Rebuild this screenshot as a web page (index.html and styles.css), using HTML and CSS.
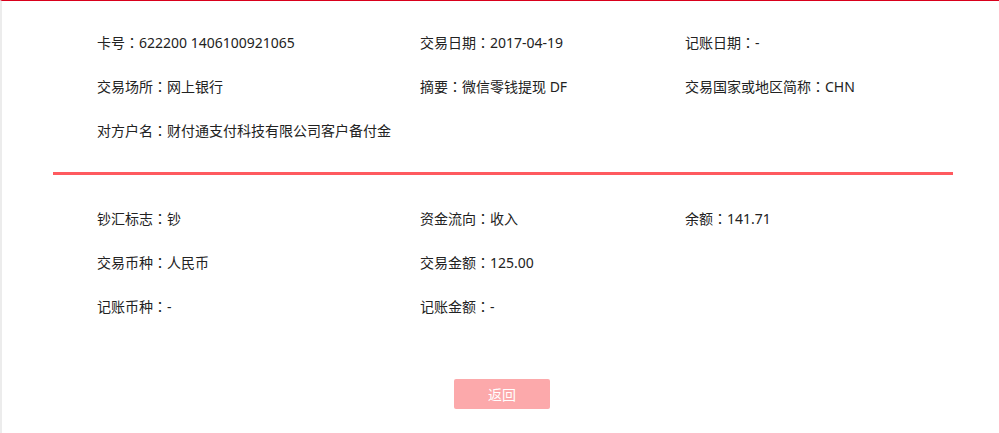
FILE: index.html
```html
<!DOCTYPE html>
<html>

<head>
    <meta charset="UTF-8">
    <meta name="viewport" content="width=device-width, initial-scale=1.0">
    <link rel="stylesheet" href="styles.css">
    <title>交易详情</title>
</head>

<body>
    <div class="page">
        <div class="detail">
            <div class="info-grid">
                <div class="info-item">卡号<span class="colon">：</span>622200 1406100921065</div>
                <div class="info-item">交易日期<span class="colon">：</span>2017-04-19</div>
                <div class="info-item">记账日期<span class="colon">：</span>-</div>
                <div class="info-item">交易场所<span class="colon">：</span>网上银行</div>
                <div class="info-item">摘要<span class="colon">：</span>微信零钱提现 DF</div>
                <div class="info-item">交易国家或地区简称<span class="colon">：</span>CHN</div>
                <div class="info-item">对方户名<span class="colon">：</span>财付通支付科技有限公司客户备付金</div>
            </div>
            <div class="divider"></div>
            <div class="info-grid">
                <div class="info-item">钞汇标志<span class="colon">：</span>钞</div>
                <div class="info-item">资金流向<span class="colon">：</span>收入</div>
                <div class="info-item">余额<span class="colon">：</span>141.71</div>
                <div class="info-item">交易币种<span class="colon">：</span>人民币</div>
                <div class="info-item">交易金额<span class="colon">：</span>125.00</div>
                <div class="info-item"></div>
                <div class="info-item">记账币种<span class="colon">：</span>-</div>
                <div class="info-item">记账金额<span class="colon">：</span>-</div>
            </div>
            <div class="actions">
                <button class="btn-back">返回</button>
            </div>
        </div>
    </div>
</body>

</html>
```

FILE: styles.css
```css
body {
    margin: 0;
    padding: 0;
    font-family: "Noto Sans", "Noto Sans CJK SC", sans-serif;
    font-size: 14px;
    color: #222;
    background-color: #fff;
}

.page {
    min-height: 432px;
    border-top: 1px solid #d9001b;
    border-left: 2px solid #ececec;
    background-color: #fff;
}

.detail {
    width: 900px;
    margin-left: 51px;
    padding-top: 19px;
}

.info-grid {
    display: grid;
    grid-template-columns: 323px 265px 1fr;
    padding-left: 44px;
}

.info-item {
    height: 44px;
    line-height: 44px;
    white-space: nowrap;
}

/* 冒号居中 */
.colon {
    font-family: "Noto Sans CJK TC", sans-serif;
}

.divider {
    height: 3px;
    margin: 20px 0 21px;
    background-color: #ff5a5f;
}

.actions {
    display: flex;
    justify-content: center;
    margin-top: 51px;
    padding-right: 2px;
}

.btn-back {
    width: 96px;
    height: 30px;
    border: none;
    border-radius: 2px;
    background-color: #fca9ab;
    color: #fff;
    font-family: "Noto Sans CJK SC", sans-serif;
    font-size: 14px;
    cursor: pointer;
}
```
